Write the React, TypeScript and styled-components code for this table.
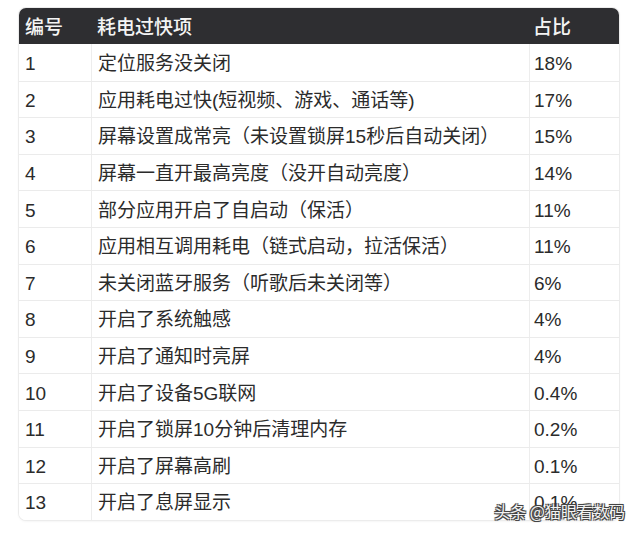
import React from "react";
import styled, { createGlobalStyle } from "styled-components";

const Global = createGlobalStyle`
  html, body { margin: 0; padding: 0; background: #ffffff; }
  body { font-family: "Liberation Sans", "Noto Sans CJK SC", sans-serif; }
`;

const Page = styled.div`
  width: 640px;
  height: 537px;
  position: relative;
  padding: 8px 0 0 19px;
  box-sizing: border-box;
  overflow: hidden;
`;

const Table = styled.div`
  width: 600px;
  border-radius: 7px;
  overflow: hidden;
  background: #fff;
  box-shadow: 0 0 0 1px #ececec, 0 1px 3px rgba(0, 0, 0, 0.08);
`;

const Row = styled.div<{ $head?: boolean }>`
  display: grid;
  grid-template-columns: 72px 438px 90px;
  height: ${(p) => (p.$head ? "36px" : "36.6px")};
  background: ${(p) => (p.$head ? "#2e2e31" : "#fff")};
  color: ${(p) => (p.$head ? "#f4f4f4" : "#2b2b2b")};
  border-top: ${(p) => (p.$head ? "none" : "1px solid #ebebeb")};
  box-sizing: border-box;
  &:nth-child(2) { border-top: none; }
`;

const Cell = styled.div<{ $head?: boolean; $last?: boolean }>`
  display: flex;
  align-items: center;
  padding-left: ${(p) => (p.$last ? "4px" : "6px")};
  padding-top: 2px;
  font-size: 19px;
  font-weight: ${(p) => (p.$head ? 500 : 400)};
  line-height: 1;
  border-left: ${(p) => (p.$head ? "none" : "1px solid #ededed")};
  &:first-child { border-left: none; }
  white-space: nowrap;
`;

const Mark = styled.div`
  position: absolute;
  right: 15px;
  bottom: 14px;
  font-size: 16px;
  font-family: "Noto Sans CJK SC", sans-serif;
  color: #f3f3f3;
  text-shadow: -1px -1px 0 #444, 1px -1px 0 #444, -1px 1px 0 #444, 1px 1px 0 #444, 0 0 2px #222;
`;

const rows: [string, string, string][] = [
  ["1", "定位服务没关闭", "18%"],
  ["2", "应用耗电过快(短视频、游戏、通话等)", "17%"],
  ["3", "屏幕设置成常亮（未设置锁屏15秒后自动关闭）", "15%"],
  ["4", "屏幕一直开最高亮度（没开自动亮度）", "14%"],
  ["5", "部分应用开启了自启动（保活）", "11%"],
  ["6", "应用相互调用耗电（链式启动，拉活保活）", "11%"],
  ["7", "未关闭蓝牙服务（听歌后未关闭等）", "6%"],
  ["8", "开启了系统触感", "4%"],
  ["9", "开启了通知时亮屏", "4%"],
  ["10", "开启了设备5G联网", "0.4%"],
  ["11", "开启了锁屏10分钟后清理内存", "0.2%"],
  ["12", "开启了屏幕高刷", "0.1%"],
  ["13", "开启了息屏显示", "0.1%"],
];

export default function App() {
  return (
    <>
      <Global />
      <Page>
        <Table>
          <Row $head>
            <Cell $head>编号</Cell>
            <Cell $head>耗电过快项</Cell>
            <Cell $head $last>占比</Cell>
          </Row>
          {rows.map((r) => (
            <Row key={r[0]}>
              <Cell>{r[0]}</Cell>
              <Cell>{r[1]}</Cell>
              <Cell $last>{r[2]}</Cell>
            </Row>
          ))}
        </Table>
        <Mark>头条 @猫眼看数码</Mark>
      </Page>
    </>
  );
}
